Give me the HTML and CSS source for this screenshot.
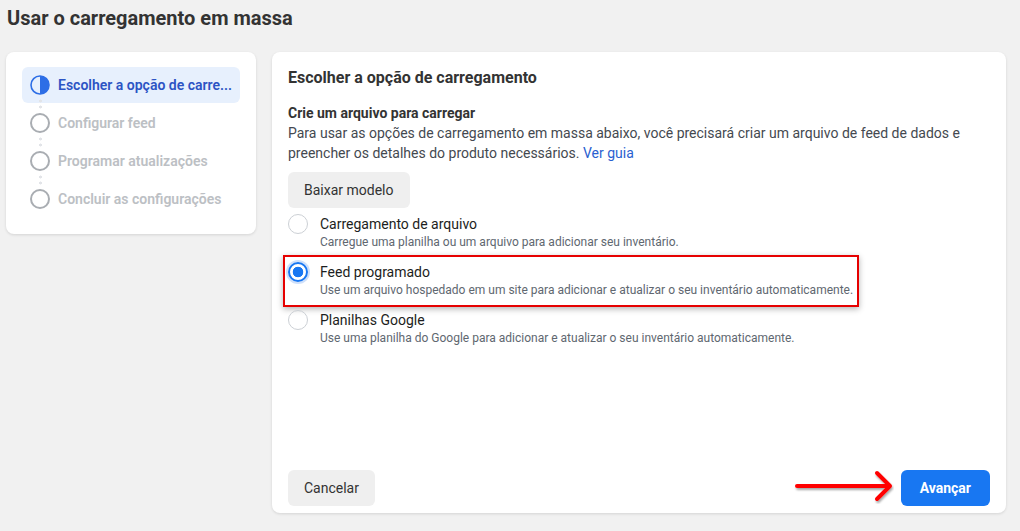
FILE: index.html
```html
<!DOCTYPE html>
<html lang="pt-BR">
<head>
    <meta charset="UTF-8">
    <title>Usar o carregamento em massa</title>
    <link rel="stylesheet" href="styles.css">
</head>
<body>

    <header class="page-title">Usar o carregamento em massa</header>

    <div class="layout">
        <aside class="card steps">
            <div class="step active">
                <svg class="step-icon" width="20" height="20" viewBox="0 0 20 20">
                    <circle cx="10" cy="10" r="9" fill="none" stroke="#2d6ee6" stroke-width="1.6"/>
                    <path d="M10 1 A9 9 0 0 1 10 19 Z" fill="#2d6ee6"/>
                </svg>
                <span>Escolher a opção de carre...</span>
            </div>
            <div class="step">
                <span class="step-circle"></span>
                <span>Configurar feed</span>
            </div>
            <div class="step">
                <span class="step-circle"></span>
                <span>Programar atualizações</span>
            </div>
            <div class="step">
                <span class="step-circle"></span>
                <span>Concluir as configurações</span>
            </div>
        </aside>

        <section class="card panel">
            <div class="panel-body">
                <h2>Escolher a opção de carregamento</h2>
                <h3>Crie um arquivo para carregar</h3>
                <p>Para usar as opções de carregamento em massa abaixo, você precisará criar um arquivo de feed de dados e preencher os detalhes do produto necessários. <a href="#">Ver guia</a></p>
                <button class="btn btn-gray">Baixar modelo</button>

                <div class="options">
                    <label class="option">
                        <span class="radio"></span>
                        <span class="option-text">
                            <span class="option-title">Carregamento de arquivo</span>
                            <span class="option-sub">Carregue uma planilha ou um arquivo para adicionar seu inventário.</span>
                        </span>
                    </label>
                    <label class="option marked">
                        <span class="radio checked"></span>
                        <span class="option-text">
                            <span class="option-title">Feed programado</span>
                            <span class="option-sub">Use um arquivo hospedado em um site para adicionar e atualizar o seu inventário automaticamente.</span>
                        </span>
                    </label>
                    <label class="option">
                        <span class="radio"></span>
                        <span class="option-text">
                            <span class="option-title">Planilhas Google</span>
                            <span class="option-sub">Use uma planilha do Google para adicionar e atualizar o seu inventário automaticamente.</span>
                        </span>
                    </label>
                </div>
            </div>

            <div class="panel-footer">
                <button class="btn btn-gray">Cancelar</button>
                <svg class="arrow" width="100" height="34" viewBox="0 0 100 34">
                    <defs>
                        <filter id="sh" x="-10%" y="-30%" width="120%" height="160%">
                            <feDropShadow dx="1" dy="2" stdDeviation="1.2" flood-color="#000" flood-opacity="0.35"/>
                        </filter>
                    </defs>
                    <g filter="url(#sh)" stroke="#f00" stroke-width="4" fill="none" stroke-linecap="round" stroke-linejoin="round">
                        <line x1="3" y1="16" x2="94" y2="16"/>
                        <polyline points="83,3 96,16 83,29"/>
                    </g>
                </svg>
                <button class="btn btn-blue">Avançar</button>
            </div>
        </section>
    </div>

</body>
</html>
```

FILE: styles.css
```css
body {
    margin: 0;
    height: 531px;
    background: #f1f1f1;
    font-family: Roboto, "Liberation Sans", Arial, sans-serif;
    color: #444950;
    overflow: hidden;
}

.page-title {
    padding: 0 7px;
    line-height: 36px;
    font-size: 20px;
    font-weight: 700;
    color: #333;
}

.layout {
    display: flex;
    align-items: flex-start;
    gap: 16px;
    margin: 16px 14px 0 6px;
}

.card {
    background: #fff;
    border-radius: 8px;
    box-shadow: 0 1px 3px rgba(0,0,0,0.12);
}

/* left steps */
.steps {
    width: 250px;
    box-sizing: border-box;
    padding: 15px 16px 17px;
    display: flex;
    flex-direction: column;
    gap: 2px;
}

.step {
    position: relative;
    display: flex;
    align-items: center;
    gap: 8px;
    height: 36px;
    padding-left: 8px;
    border-radius: 6px;
    font-size: 14px;
    font-weight: 600;
    color: #bcc0c4;
}

.step + .step::before {
    content: "";
    position: absolute;
    left: 16.5px;
    top: -7px;
    width: 3px;
    height: 12px;
    background: radial-gradient(circle, #e2e4e8 1.4px, transparent 1.6px) 0 0 / 3px 6px repeat-y;
}

.step.active {
    background: #e7f0fd;
    color: #2c54c4;
}

.step-icon {
    flex: none;
}

.step-circle {
    flex: none;
    width: 20px;
    height: 20px;
    box-sizing: border-box;
    border: 2px solid #a9adb2;
    border-radius: 50%;
}

/* right panel */
.panel {
    flex: 1;
    height: 461px;
    box-sizing: border-box;
    padding: 16px 16px 7px;
    display: flex;
    flex-direction: column;
}

.panel-body {
    flex: 1;
}

.panel h2 {
    margin: 0;
    font-size: 16px;
    line-height: 20px;
    font-weight: 700;
    color: #333;
}

.panel h3 {
    margin: 15px 0 0;
    font-size: 14px;
    line-height: 20px;
    font-weight: 700;
    color: #333;
}

.panel p {
    margin: 0;
    font-size: 14px;
    line-height: 20px;
    color: #444950;
}

.panel p a {
    color: #2a5fd0;
    text-decoration: none;
}

.btn {
    height: 36px;
    padding: 0 16px;
    border: none;
    border-radius: 6px;
    font-family: inherit;
    font-size: 14px;
    cursor: pointer;
}

.btn-gray {
    background: #efefef;
    color: #333;
    font-weight: 400;
}

.btn-blue {
    background: #1877f2;
    color: #fff;
    font-weight: 700;
    padding: 0 19px;
}

.panel-body .btn {
    margin-top: 9px;
}

.options {
    display: flex;
    flex-direction: column;
    gap: 12px;
    margin-top: 6px;
}

.option {
    position: relative;
    display: flex;
    gap: 12px;
}

.option.marked::after {
    content: "";
    position: absolute;
    left: -5px;
    top: -7px;
    width: 576px;
    height: 52px;
    box-sizing: border-box;
    border: 2px solid #e60000;
    box-shadow: 0 2px 6px rgba(0,0,0,0.3);
    pointer-events: none;
}

.radio {
    flex: none;
    width: 20px;
    height: 20px;
    box-sizing: border-box;
    border: 1px solid #ccd0d5;
    border-radius: 50%;
}

.radio.checked {
    border: 2px solid #1877f2;
    background: radial-gradient(circle, #1877f2 5px, #fff 5.6px);
    box-shadow: 0 0 0 2px #cfe0fa;
}

.option-text {
    display: flex;
    flex-direction: column;
}

.option-title {
    font-size: 14px;
    line-height: 20px;
    color: #1c1e21;
}

.option-sub {
    font-size: 12px;
    line-height: 16px;
    color: #606770;
}

.panel-footer {
    position: relative;
    display: flex;
    justify-content: space-between;
}

.arrow {
    position: absolute;
    right: 96px;
    top: 0;
}
```
